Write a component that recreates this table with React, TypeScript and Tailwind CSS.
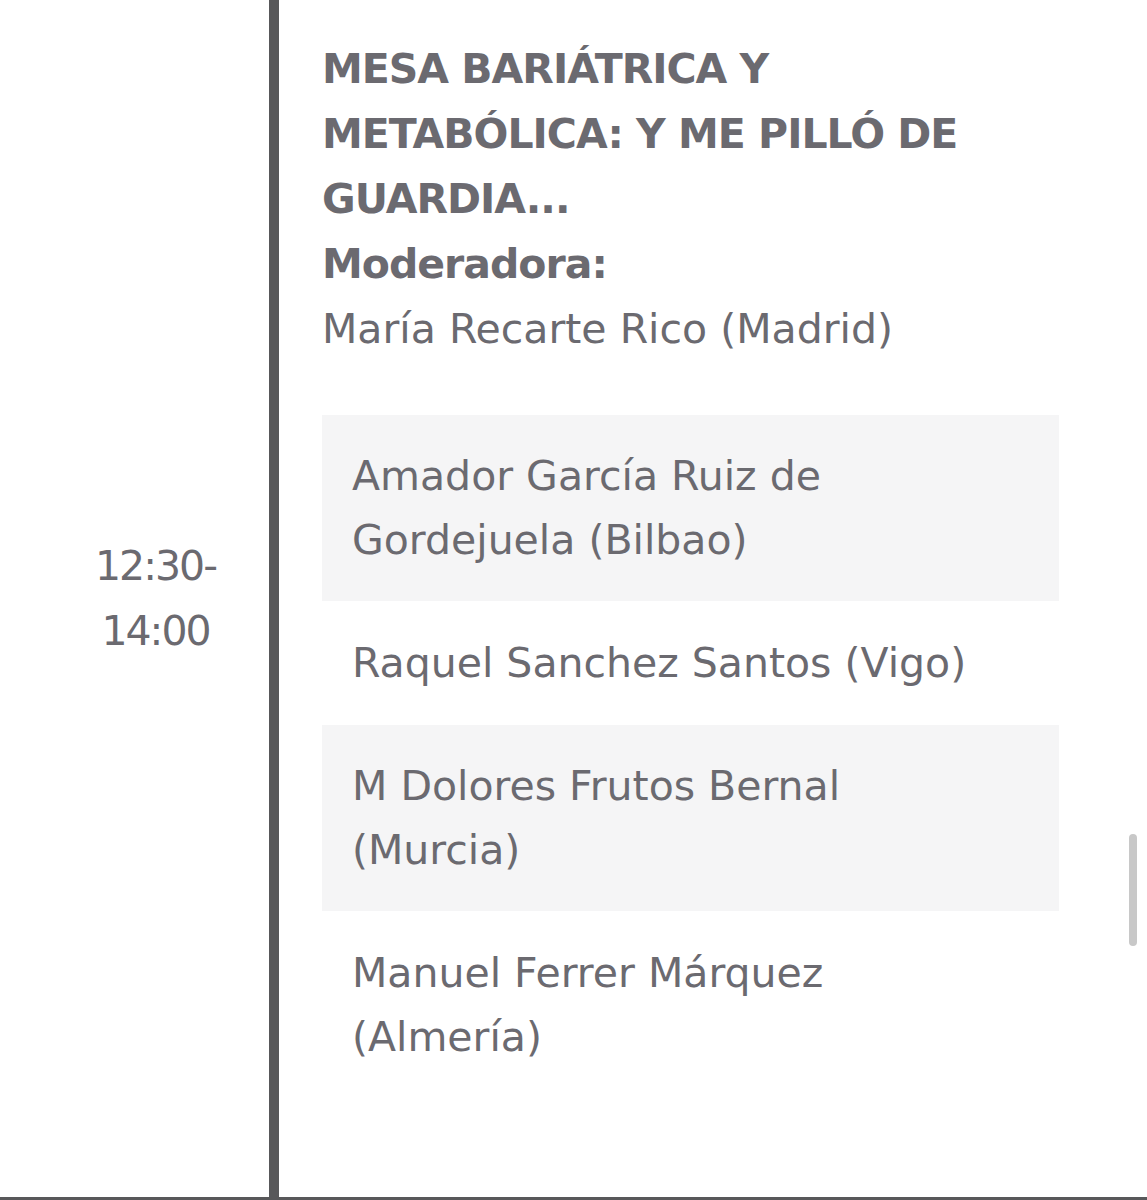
const speakers = [
  { lines: ["Amador García Ruiz de", "Gordejuela (Bilbao)"], shaded: true },
  { lines: ["Raquel Sanchez Santos (Vigo)"], shaded: false },
  { lines: ["M Dolores Frutos Bernal", "(Murcia)"], shaded: true },
  { lines: ["Manuel Ferrer Márquez", "(Almería)"], shaded: false },
];

function SpeakerRow({ lines, shaded }: { lines: string[]; shaded: boolean }) {
  return (
    <div className={shaded ? "bg-[#f5f5f6] px-[30px] py-[29px]" : "px-[30px] py-[30px]"}>
      {lines.map((line) => (
        <div key={line} className="leading-[64px]">
          {line}
        </div>
      ))}
    </div>
  );
}

export default function App() {
  return (
    <div className="relative w-[1147px] h-[1200px] bg-white overflow-hidden text-[#6b6a70] font-['DejaVu_Sans',sans-serif] text-[41px]">
      <div className="flex h-full border-b-[3px] border-[#58585a]">
        {/* time column */}
        <div className="w-[269px] pl-[42px] flex items-center justify-center">
          <div className="text-center leading-[65px] tracking-[-2px]">
            <div>12:30-</div>
            <div>14:00</div>
          </div>
        </div>

        <div className="w-[10px] bg-[#58585a] shrink-0" />

        {/* session details */}
        <div className="pl-[43px] pt-[37px]">
          <div className="font-bold leading-[65px] tracking-[-1px]">
            <div>MESA BARIÁTRICA Y</div>
            <div>METABÓLICA: Y ME PILLÓ DE</div>
            <div>GUARDIA...</div>
            <div>Moderadora:</div>
          </div>
          <div className="leading-[65px]">María Recarte Rico (Madrid)</div>

          <div className="mt-[53px] w-[737px]">
            {speakers.map((s) => (
              <SpeakerRow key={s.lines[0]} lines={s.lines} shaded={s.shaded} />
            ))}
          </div>
        </div>
      </div>

      {/* scrollbar thumb */}
      <div className="absolute left-[1129px] top-[834px] w-[8px] h-[112px] rounded-full bg-[#c8c8c8]" />
    </div>
  );
}
